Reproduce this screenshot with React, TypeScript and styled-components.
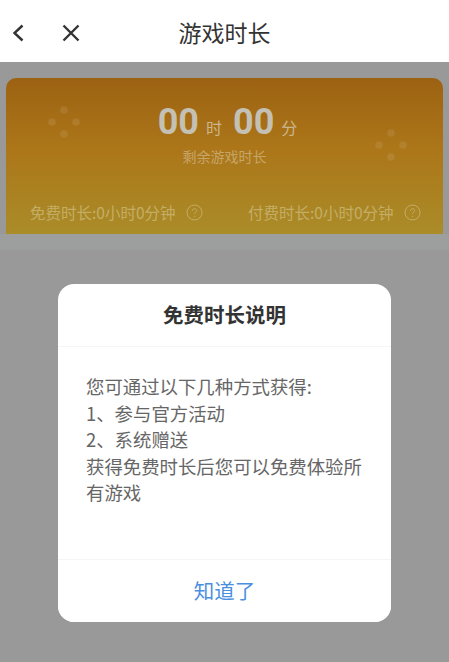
import styled, { createGlobalStyle } from "styled-components";

const GlobalStyle = createGlobalStyle`
  html, body {
    margin: 0;
    padding: 0;
    background: #fff;
    font-family: "Noto Sans CJK SC", Roboto, "Liberation Sans", sans-serif;
  }
  * { box-sizing: border-box; }
`;

function GameDots(props: { className?: string }) {
  return (
    <svg className={props.className} width="34" height="34" viewBox="0 0 34 34">
      <circle cx="17" cy="5" r="3.8" />
      <circle cx="5" cy="17" r="3.8" />
      <circle cx="29" cy="17" r="3.8" />
      <circle cx="17" cy="29" r="3.8" />
    </svg>
  );
}

function HelpIcon() {
  return (
    <svg width="17" height="17" viewBox="0 0 17 17" fill="none" stroke="currentColor">
      <circle cx="8.5" cy="8.5" r="7.5" strokeWidth="1" />
      <path d="M6.4 6.8c0-1.3.9-2.1 2.1-2.1s2.1.8 2.1 1.9c0 1.6-2.1 1.6-2.1 3.2" strokeWidth="1" />
      <circle cx="8.5" cy="12.3" r="0.6" fill="currentColor" stroke="none" />
    </svg>
  );
}

export default function App() {
  return (
    <Page>
      <GlobalStyle />
      <Header>
        <NavIcons>
          <svg width="14" height="20" viewBox="0 0 14 20" fill="none" stroke="#333" strokeWidth="2.4">
            <path d="M11.5 2.5 3.5 10l8 7.5" />
          </svg>
          <svg width="20" height="20" viewBox="0 0 20 20" fill="none" stroke="#333" strokeWidth="2.4">
            <path d="M2.5 2.5l15 15M17.5 2.5l-15 15" />
          </svg>
        </NavIcons>
        <HeaderTitle>游戏时长</HeaderTitle>
      </Header>
      <Content>
        <TimeCard>
          <LeftDots />
          <RightDots />
          <Clock>
            <Digits>00</Digits>
            <Unit>时</Unit>
            <Digits>00</Digits>
            <Unit>分</Unit>
          </Clock>
          <Remaining>剩余游戏时长</Remaining>
          <Breakdown>
            <BreakdownItem>
              免费时长:0小时0分钟
              <HelpIcon />
            </BreakdownItem>
            <BreakdownItem>
              付费时长:0小时0分钟
              <HelpIcon />
            </BreakdownItem>
          </Breakdown>
        </TimeCard>
        <Separator />
      </Content>
      <Scrim>
        <Dialog>
          <DialogTitle>免费时长说明</DialogTitle>
          <DialogBody>
            <p>您可通过以下几种方式获得:</p>
            <p>1、参与官方活动</p>
            <p>2、系统赠送</p>
            <p>获得免费时长后您可以免费体验所有游戏</p>
          </DialogBody>
          <DialogButton>知道了</DialogButton>
        </Dialog>
      </Scrim>
    </Page>
  );
}

const Page = styled.div`
  position: relative;
  width: 449px;
  height: 662px;
  overflow: hidden;
  background: #fff;
`;

const Header = styled.header`
  position: relative;
  height: 62px;
  display: flex;
  align-items: center;
  justify-content: center;
  background: #fff;
`;

const NavIcons = styled.div`
  position: absolute;
  left: 11px;
  top: 23px;
  display: flex;
  align-items: center;
  gap: 36px;

  svg {
    display: block;
  }
`;

const HeaderTitle = styled.h1`
  margin: 0;
  font-size: 23px;
  font-weight: 400;
  line-height: 30px;
  color: #333;
  padding-top: 2px;
`;

const Content = styled.main`
  height: 600px;
  padding-top: 16px;
  background: #999;
`;

const TimeCard = styled.section`
  position: relative;
  height: 156px;
  margin: 0 6px;
  padding-top: 21px;
  border-radius: 10px 10px 0 0;
  background: linear-gradient(180deg, #9c6212 0%, #ac7619 45%, #aa8c28 100%);
  color: #c4c0b4;
  text-align: center;
`;

const LeftDots = styled(GameDots)`
  position: absolute;
  left: 41px;
  top: 27px;
  fill: rgba(255, 255, 255, 0.09);
`;

const RightDots = styled(GameDots)`
  position: absolute;
  right: 35px;
  top: 50px;
  fill: rgba(255, 255, 255, 0.09);
`;

const Clock = styled.div`
  display: flex;
  justify-content: center;
  align-items: baseline;
  gap: 7px;
  height: 46px;
  padding-left: 6px;
`;

const Digits = styled.span`
  font-family: Roboto, "Liberation Sans", sans-serif;
  font-size: 36px;
  font-weight: 700;
  line-height: 46px;
  & ~ & {
    margin-left: 4px;
  }
`;

const Unit = styled.span`
  font-size: 16px;
  color: #c9b68c;
`;

const Remaining = styled.div`
  margin-top: 1px;
  font-size: 14px;
  line-height: 20px;
  color: #c7a568;
`;

const Breakdown = styled.div`
  position: absolute;
  left: 24px;
  top: 123px;
  display: grid;
  grid-template-columns: 218px auto;
`;

const BreakdownItem = styled.div`
  display: flex;
  align-items: center;
  gap: 10px;
  font-size: 15.5px;
  line-height: 22px;
  white-space: nowrap;
  color: #c4ae66;
`;

const Separator = styled.div`
  height: 16px;
  background: #9d9f9f;
`;

const Scrim = styled.div`
  position: absolute;
  inset: 62px 0 0 0;
  padding-top: 222px;
  display: flex;
  justify-content: center;
  align-items: flex-start;
`;

const Dialog = styled.div`
  width: 333px;
  height: 338px;
  display: flex;
  flex-direction: column;
  border-radius: 16px;
  background: #fff;
  overflow: hidden;
`;

const DialogTitle = styled.h2`
  margin: 0;
  height: 63px;
  padding-bottom: 2px;
  display: flex;
  align-items: center;
  justify-content: center;
  border-bottom: 1px solid #f5f5f5;
  font-size: 20.5px;
  font-weight: 700;
  color: #333;
`;

const DialogBody = styled.div`
  flex: 1;
  padding: 26px 28px 0;
  font-size: 18.4px;
  line-height: 26.6px;
  color: #666;

  p {
    margin: 0;
  }
`;

const DialogButton = styled.button`
  height: 63px;
  padding: 0 0 3px;
  border: 0;
  border-top: 1px solid #f5f5f5;
  background: #fff;
  color: #4a8fe0;
  font-family: inherit;
  font-size: 20.5px;
`;
